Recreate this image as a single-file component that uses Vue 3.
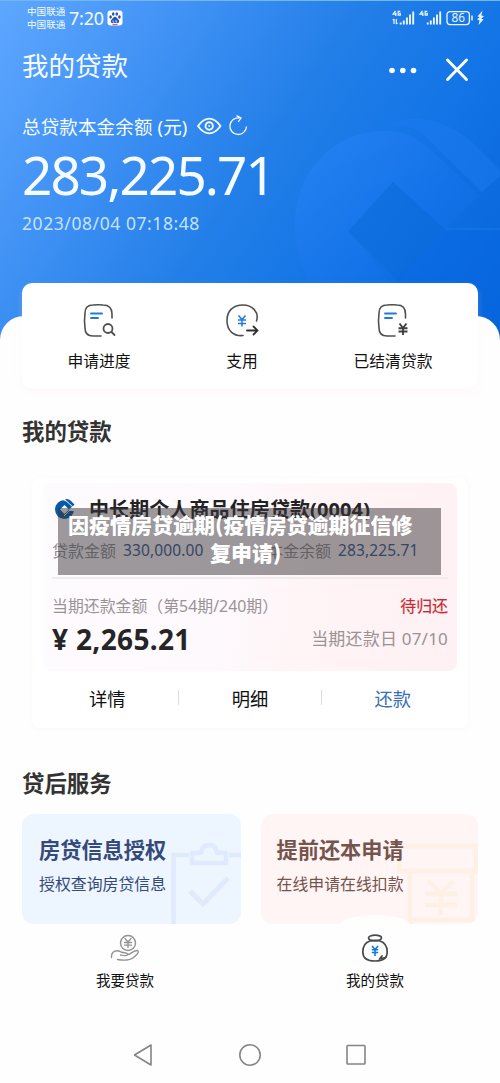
<script setup>
const actions = [
  { label: '申请进度', kind: 'search' },
  { label: '支用', kind: 'arrow' },
  { label: '已结清贷款', kind: 'yen' },
]
</script>

<template>
  <div class="screen">
    <header class="hero">
      <svg class="mark" width="500" height="340" viewBox="0 0 500 340">
        <defs>
          <linearGradient id="ga" x1="0" y1="0" x2="1" y2="1">
            <stop offset="0" stop-color="#2b86f8" stop-opacity=".65" />
            <stop offset="1" stop-color="#0a68e4" stop-opacity=".35" />
          </linearGradient>
        </defs>
        <path d="M387 127C400 115 440 112 474 144L500 170V176L482 192L419 131C408 126 397 125 387 127Z" fill="#1b7af0" opacity=".5" />
        <path d="M480 197C420 138 412 131 385 131C335 131 295 170 295 225C295 250 303 272 314 290H395L349 231L393 182L445 229L474 200Z" fill="url(#ga)" />
        <path d="M393 182L445 229L399 282L348 231Z" fill="#0c68d8" opacity=".4" />
        <path d="M446 229H500V320H380V296Z" fill="#0868e4" opacity=".5" />
        <path d="M446 229H500" stroke="#2b81ea" stroke-width="1" opacity=".6" />
      </svg>
      <div class="status">
        <div class="carrier"><span>中国联通</span><span>中国联通</span></div>
        <span class="clock">7:20</span>
        <svg class="paw" width="16" height="16" viewBox="0 0 16 16">
          <rect x=".5" y=".5" width="15" height="15" rx="3" fill="#fff" />
          <g fill="#2856b8">
            <ellipse cx="3.6" cy="7" rx="1.3" ry="1.8" /><ellipse cx="6.2" cy="4" rx="1.3" ry="1.8" />
            <ellipse cx="9.8" cy="4" rx="1.3" ry="1.8" /><ellipse cx="12.4" cy="7" rx="1.3" ry="1.8" />
            <path d="M8 6.8C6.5 6.8 5.8 8.6 4.5 9.8C3 11.3 4 13.5 6 13.2C7.4 13 8.6 13 10 13.2C12 13.5 13 11.3 11.5 9.8C10.2 8.6 9.5 6.8 8 6.8Z" />
          </g>
          <path d="M6 10.5v1.6h1.3M9 10v2.1h1.3" stroke="#fff" stroke-width=".7" fill="none" />
          <path d="M5.5 14.6h5" stroke="#e04848" />
        </svg>
        <svg class="signals" width="94" height="20" viewBox="0 0 94 20" fill="none" stroke="#eaf5ff">
          <path d="M3.5 1.8L1 5.2H4.5M3.8 3.5V7M8.3 2.3H6.2V6.2H8.2V4.4H7.2" stroke-width="1.3" />
          <path d="M8.7 15.500v-2M11.8 15.500v-4M14.9 15.500V8.5M18 15.500V5.5M21.2 15.500V2.5" stroke-width="1.9" />
          <path d="M2 10v5M.8 11.2L2 10M4.3 10v5M5.5 13.8L4.3 15" stroke-width="1.2" />
          <g transform="translate(27)">
            <path d="M3.5 1.8L1 5.2H4.5M3.8 3.5V7M8.3 2.3H6.2V6.2H8.2V4.4H7.2" stroke-width="1.3" />
            <path d="M8.7 15.500v-2M11.8 15.500v-4M14.9 15.500V8.5M18 15.500V5.5M21.2 15.500V2.5" stroke-width="1.9" />
          </g>
          <rect x="55" y="2.6" width="22.4" height="13" rx="3" stroke-width="1.3" />
          <path d="M80 6.5v5" stroke-width="1.5" />
          <text x="66.2" y="13.2" text-anchor="middle" fill="#eaf5ff" stroke="none" class="bat">86</text>
          <path d="M90.500 1.500L85.500 7.500L87.800 8L85 10.500L87.500 11L86.500 16L91.500 10.500L89.300 9.800L92 7L89.300 6.500Z" fill="#eaf5ff" stroke="none" />
        </svg>
      </div>
      <div class="titlebar">
        <h1>我的贷款</h1>
        <svg width="80" height="26" viewBox="0 0 80 26">
          <g fill="#fff"><circle cx="3" cy="13.5" r="2.8" /><circle cx="13.8" cy="13.5" r="2.8" /><circle cx="24.5" cy="13.5" r="2.8" /></g>
          <path d="M58.500 3L77.500 22.5M77.500 3L58.500 22.5" stroke="#fff" stroke-width="2.9" stroke-linecap="round" />
        </svg>
      </div>
      <div class="balance-label">
        <span>总贷款本金余额 (元)</span>
        <svg width="52" height="22" viewBox="0 0 52 22" fill="none" stroke="#f2faff">
          <path d="M1 11C8 1.200 16.500 1.200 23.500 11C16.500 20.800 8 20.800 1 11Z" stroke-width="1.9" stroke-linejoin="round" />
          <circle cx="12.200" cy="11" r="3.700" stroke-width="1.900" /><circle cx="12.200" cy="11" r=".9" fill="#fff" stroke="none" />
          <path d="M42.500 3A8.300 8.300 0 1 0 49.500 11.500M39.500 .6L44 3L41.200 7" stroke-width="1.300" />
        </svg>
      </div>
      <div class="balance">283,225.71</div>
      <div class="stamp">2023/08/04 07:18:48</div>
    </header>

    <main class="sheet">
      <section class="actions">
        <div v-for="a in actions" :key="a.kind" class="action" :class="a.kind">
          <svg width="34" height="36" viewBox="0 0 34 36" fill="none" stroke="#505050" stroke-width="1.6" stroke-linecap="round">
            <template v-if="a.kind === 'search'">
              <path d="M30 15V11Q30 2 21 2Q16 1.500 11 2Q3 2 3 10Q2 18 3 25Q3 33 11 33H19" />
              <path d="M9 10.500H20M9 15H16" stroke="#2079df" stroke-width="1.900" />
              <circle cx="26" cy="25.500" r="4.500" stroke-width="1.800" /><path d="M29.500 29L32.500 32" stroke-width="1.800" />
            </template>
            <template v-else-if="a.kind === 'arrow'">
              <path d="M31.500 18C34.500 9 27 2 18 2C8 2 2 8 2 17.500C2 28 9 33.500 18 32.500" />
              <path d="M13.500 12.500L17 16.500L20.500 12.500M13 17H21M13 20.500H21M17 16.500V23.500" stroke="#2079df" stroke-width="1.500" stroke-linecap="butt" />
              <path d="M22 27.500H32.500M28.500 23.500L32.500 27.500L28.500 31.500" stroke="#303030" stroke-width="1.800" />
            </template>
            <template v-else>
              <path d="M29.500 15V11Q29.500 2 21 2Q16 1.500 11 2Q3 2 3 10Q2 18 3 25Q3 33 11 33H19" />
              <path d="M9 10.500H20M9 15H16" stroke="#2079df" stroke-width="1.900" />
              <path d="M23.500 20.500L27 25L30.500 20.500M22.500 25.200H31.500M22.500 28.500H31.500M27 25V32" stroke="#404040" stroke-width="1.900" stroke-linecap="butt" />
            </template>
          </svg>
          <span>{{ a.label }}</span>
        </div>
      </section>

      <h2 class="loans-title">我的贷款</h2>

      <section class="loan">
        <div class="loan-body">
          <div class="loan-name">
            <svg width="22" height="22" viewBox="0 0 22 22">
              <circle cx="10.500" cy="11.500" r="9.500" fill="#075aa5" />
              <path d="M22 12.500H15.500L10 18" stroke="#fff8fb" stroke-width="1" fill="none" />
              <path d="M10.500 7L15 11.500L10.500 16L6 11.500Z" fill="#fff" />
              <path d="M15 11.500L22 5V13H15Z" fill="#fffafd" />
              <path d="M11 1Q15 .5 17 3L20.500 6.500L18.500 8.500Z" fill="#075aa5" />
              <path d="M9.500 2Q12 1.800 18.500 8.800" stroke="#fff" stroke-width="1" fill="none" />
            </svg>
            <span>中长期个人商品住房贷款(0004)</span>
          </div>
          <div class="sums">
            <span class="k">贷款金额</span><span class="v">330,000.00</span>
            <span class="k second">本金余额</span><span class="v">283,225.71</span>
          </div>
          <div class="due-head"><span>当期还款金额（第54期/240期）</span><b>待归还</b></div>
          <div class="due"><strong>¥ 2,265.21</strong><span>当期还款日 07/10</span></div>
          <div class="caption"><div class="line1">因疫情房贷逾期(疫情房贷逾期征信修</div><div class="line2">复申请)</div></div>
        </div>
        <nav class="loan-nav"><span>详情</span><i></i><span>明细</span><i></i><span class="pay">还款</span></nav>
      </section>

      <h2 class="svc-title">贷后服务</h2>
      <section class="services">
        <article class="auth">
          <svg class="art" width="72" height="84" viewBox="0 0 72 84" fill="none" stroke="#dfeafc" stroke-width="4.500">
            <path d="M4.500 84V15H20M60 15H72" />
            <path d="M23 13H32Q33 5 40 5Q47 5 48 13H57V23H23Z" stroke-linejoin="round" />
            <path d="M21 51L34 64L59 38" stroke-width="5" />
          </svg>
          <h3>房贷信息授权</h3><p>授权查询房贷信息</p>
        </article>
        <article class="prepay">
          <svg class="art" width="82" height="84" viewBox="0 0 82 84" fill="none" stroke="#fff0e6" stroke-width="4.500">
            <path d="M9 6H80V31H3V12Q3 6 9 6M14 31V84M76 31V84M14 80H76" />
            <path d="M32 41L45 53L58 41M29 54H61M29 65H61M45 53V75" />
          </svg>
          <h3>提前还本申请</h3><p>在线申请在线扣款</p>
        </article>
      </section>
    </main>

    <footer class="tabs">
      <div class="tab">
        <svg width="30" height="30" viewBox="0 0 30 30" fill="none" stroke="#929292" stroke-width="1.400" stroke-linecap="round" stroke-linejoin="round">
          <circle cx="18" cy="9" r="7.500" />
          <path d="M15 4.500L18 8L21 4.500M14.500 8.500H21.500M14.500 11.200H21.500M18 8V13.500" stroke-width="1.300" />
          <path d="M1.500 23.500C1 17 7 15.500 11 18C14 19.500 17 18 18 20.500C17 22.500 13 21.500 10.500 21M18 20.500C21 20 24 16 27.500 16.500C30 18 26 21.500 23.500 23.500C19 27 13 26.500 7.500 25.500" />
        </svg>
        <span>我要贷款</span>
      </div>
      <div class="tab current">
        <svg width="30" height="30" viewBox="0 0 30 30" fill="none" stroke="#484b4d" stroke-width="1.700" stroke-linecap="round">
          <ellipse cx="15" cy="4" rx="6.500" ry="2.800" />
          <path d="M10 7C5 8.500 2.800 13 2.800 18C2.800 24 7 27 15 27C23 27 27.200 24 27.200 18C27.200 13 25 8.500 20 7Q15 5.500 10 7" />
          <path d="M12 12L15 15.500L18 12M11.800 15.700H18.200M11.800 18.500H18.200M15 15V22" stroke="#1677d9" stroke-width="1.600" stroke-linecap="butt" />
          <path d="M19.500 25L22 22M20.500 24.500L26 23.500" />
        </svg>
        <span>我的贷款</span>
      </div>
    </footer>
    <div class="sysnav">
      <svg width="20" height="24" viewBox="0 0 20 24"><path d="M18 2V22L1.500 12Z" /></svg>
      <svg class="home" width="24" height="24" viewBox="0 0 24 24"><circle cx="12" cy="12" r="10.200" /></svg>
      <svg width="22" height="24" viewBox="0 0 22 24"><rect x="2" y="2.500" width="18" height="18.500" rx=".8" /></svg>
    </div>
  </div>
</template>

<style>
body { margin: 0; background: #fff; }
</style>
<style scoped>
.screen { width: 500px; height: 1083px; overflow: hidden; background: #fefefe; font-family: "Noto Sans", "Noto Sans CJK SC", sans-serif; display: flex; flex-direction: column; }
h1, h2, h3, p { margin: 0; font-weight: 400; }
span, b, strong { white-space: nowrap; }
svg { flex: none; display: block; }
.hero { position: relative; flex: none; height: 340px; box-sizing: border-box; padding-left: 22px; color: #f5fbff; background: linear-gradient(124deg, #5ea7ff 0%, #4494f6 23%, #237fe8 50%, #1274e6 72%, #0563d8 100%); border-top: 1px solid #72b8ef; }
.mark { position: absolute; left: 0; top: -1px; }
.status { position: relative; display: flex; height: 34px; }
.carrier { width: 41px; margin-left: 5px; padding-top: 4px; font-size: 9.600px; line-height: 13px; display: flex; flex-direction: column; }
.clock { font-size: 18px; line-height: 35px; letter-spacing: -.2px; width: 38px; margin-left: 1px; }
.paw { margin-top: 9px; }
.signals { margin: 8px 0 0 269px; }
.bat { font-size: 11.800px; font-family: "Noto Sans", sans-serif; }
.titlebar { position: relative; height: 62px; display: flex; align-items: center; justify-content: space-between; padding-right: 31px; }
h1 { font-size: 26.500px; line-height: 63px; height: 62px; }
.titlebar svg { margin-top: 7px; }
.balance-label { position: relative; display: flex; align-items: center; height: 58px; font-size: 18.500px; gap: 8px; }
.balance-label span { width: 167px; letter-spacing: .15px; }
.balance { position: relative; height: 46px; line-height: 39px; font-size: 53px; letter-spacing: -1.900px; }
.stamp { position: relative; font-size: 17.500px; line-height: 44px; color: #c6e2ff; letter-spacing: .57px; }
.sheet { position: relative; flex: none; height: 608px; margin-top: -24px; background: #fefefe; border-radius: 24px 24px 0 0; }
.actions { width: 456px; height: 106px; margin: -33px auto 0; background: #fff; border-radius: 10px; box-shadow: 0 3px 6px rgba(250, 225, 240, .22); position: relative; display: flex; }
.action { display: flex; flex-direction: column; align-items: center; padding-top: 20px; width: 154px; color: #111; font-size: 15.800px; }
.action span { line-height: 24px; margin-top: 10px; }
.action.arrow { width: 132px; }
.action.yen { width: 170px; }
h2 { font-size: 22.400px; font-weight: 700; color: #333; margin-left: 22px; line-height: 32px; }
.loans-title { margin-top: 27px; }
.loan { width: 436px; height: 250px; margin: 30px auto 0; border-radius: 8px; box-shadow: 0 1px 5px rgba(245, 225, 240, .28); padding: 5px 11px 0; box-sizing: border-box; background: #fff; }
.loan-body { position: relative; height: 188px; box-sizing: border-box; padding: 0 9px; border-radius: 8px; background: linear-gradient(100deg, #fefbff 0%, #fef9fd 45%, #fff4f6 65%, #fff1f3 100%); }
.loan-name { display: flex; padding: 15px 0 0 2px; height: 38px; gap: 13px; font-size: 20px; font-weight: 700; color: #222; letter-spacing: .1px; }
.loan-name span { line-height: 24px; }
.sums { height: 43px; padding-bottom: 13px; border-bottom: 2px solid #efebee; display: flex; align-items: center; font-size: 16px; box-sizing: border-box; }
.k { color: #8c8c8c; }
.v { color: #315689; width: 81px; margin-left: 7px; font-size: 15.500px; letter-spacing: .12px; }
.k.second { margin-left: 63px; }
.due-head { height: 47px; padding-top: 3px; display: flex; align-items: center; justify-content: space-between; font-size: 15.900px; color: #999395; }
.due-head b { color: #c92b34; font-weight: 400; -webkit-text-stroke: .2px #c92b34; }
.due { display: flex; justify-content: space-between; color: #999395; font-size: 17px; letter-spacing: .2px; line-height: 20px; }
.due strong { color: #252525; font-size: 28px; line-height: 20px; font-weight: 700; letter-spacing: .35px; }
.caption { position: absolute; left: 15px; top: 25px; width: 383px; height: 67px; box-sizing: border-box; padding-top: 2px; color: #fff; background: rgba(57, 54, 57, .5); font: 900 21px/28px "Noto Sans CJK SC", sans-serif; white-space: nowrap; }
.line1 { margin-left: 10px; }
.line2 { margin-left: 152px; }
.loan-nav { display: flex; justify-content: space-between; align-items: center; height: 53px; padding: 0 46px; font-size: 18.300px; color: #111; }
.loan-nav i { width: 1px; height: 15px; background: #ddd; }
.pay { color: #3970b4; }
.svc-title { margin-top: 40px; }
.services { display: flex; margin: 14px 22px 0; gap: 20px; }
article { position: relative; height: 110px; width: 219px; border-radius: 12px; overflow: hidden; box-sizing: border-box; padding: 20px 16px 0; }
.auth { background: #edf6ff; color: #354a79; padding-left: 17px; }
.prepay { background: #fff5f5; color: #76544e; width: 218px; }
.art { position: absolute; right: 0; bottom: 0; }
h3 { position: relative; font-size: 21.200px; line-height: 32px; font-weight: 700; }
article p { position: relative; font-size: 15.900px; line-height: 24px; margin-top: 6px; }
.tabs { position: relative; flex: none; height: 92px; display: flex; background: #fefefe; }
.tab { position: relative; width: 250px; display: flex; flex-direction: column; align-items: center; padding-top: 10px; font-size: 14.500px; color: #111; }
.tab span { line-height: 22px; margin-top: 5px; }
.tab svg { position: relative; }
.current::before { content: ""; position: absolute; left: 90px; top: -9px; width: 70px; height: 20px; border-radius: 50%; background: #fefefe; }
.sysnav { display: flex; align-items: center; padding: 27px 133px 0; justify-content: space-between; }
.sysnav svg { fill: none; stroke: #858585; stroke-width: 1.600; stroke-linejoin: round; }
.home { margin-left: 2px; }
</style>
